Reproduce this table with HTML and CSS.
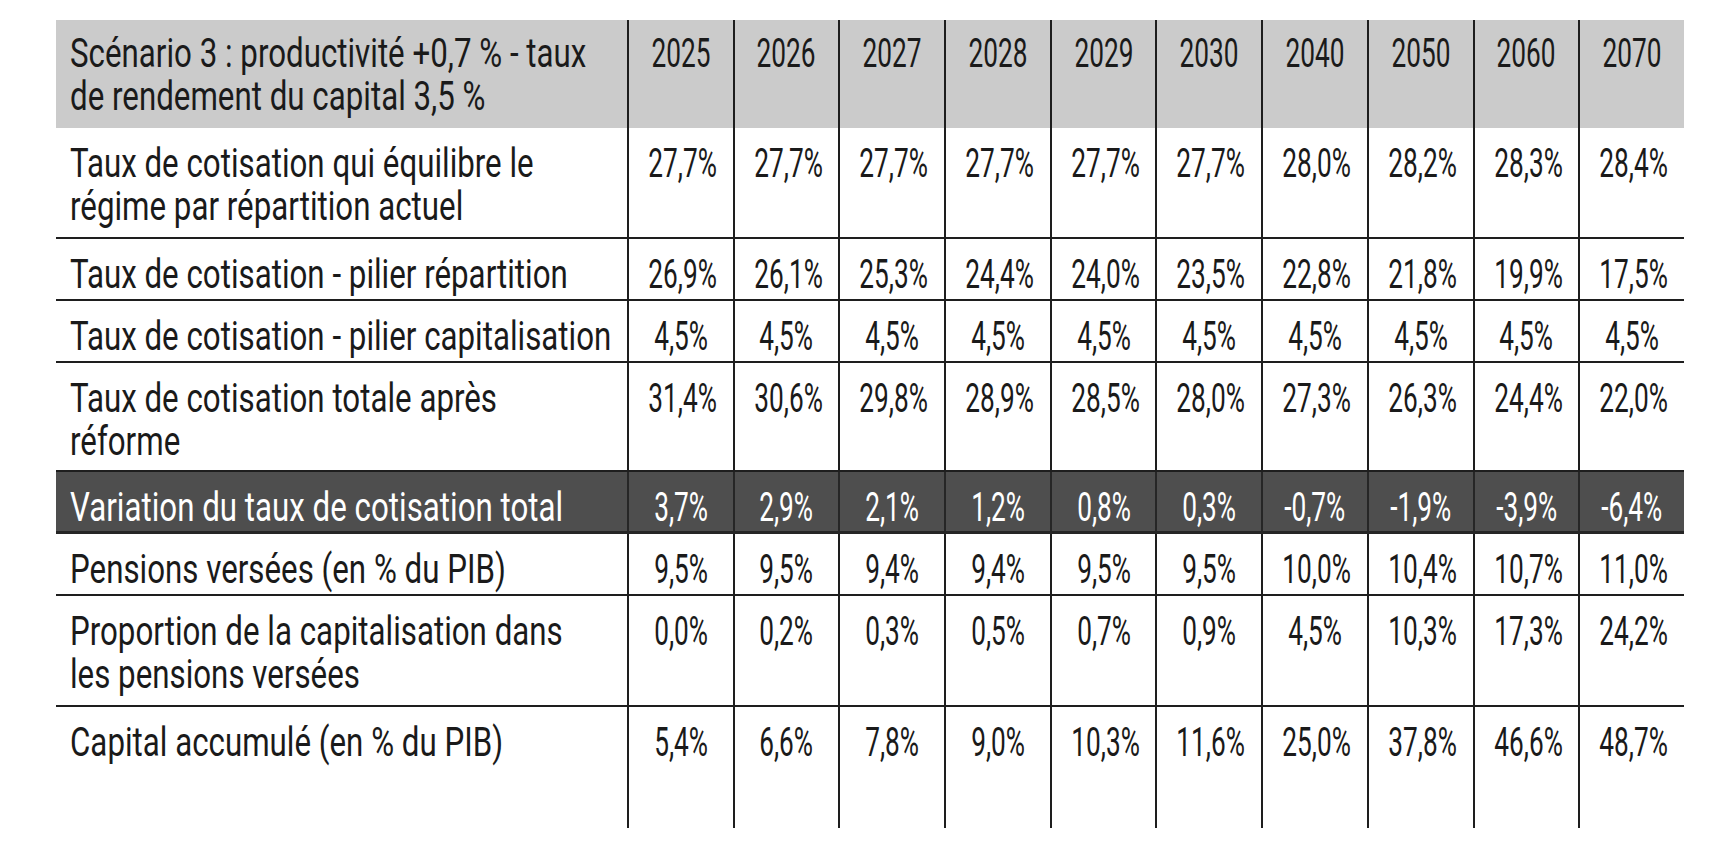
FILE: index.html
```html
<!DOCTYPE html>
<html lang="fr">
<head>
<meta charset="utf-8">
<title>Scénario 3</title>
<link rel="stylesheet" href="styles.css">
</head>
<body>
<div class="table">
  <div class="row head">
    <div class="cell label"><span class="t">Scénario 3 : productivité +0,7 % - taux
de rendement du capital 3,5 %</span></div>
    <div class="cell num"><span class="n">2025</span></div>
    <div class="cell num"><span class="n">2026</span></div>
    <div class="cell num"><span class="n">2027</span></div>
    <div class="cell num"><span class="n">2028</span></div>
    <div class="cell num"><span class="n">2029</span></div>
    <div class="cell num"><span class="n">2030</span></div>
    <div class="cell num"><span class="n">2040</span></div>
    <div class="cell num"><span class="n">2050</span></div>
    <div class="cell num"><span class="n">2060</span></div>
    <div class="cell num"><span class="n">2070</span></div>
  </div>
  <div class="row r-tall">
    <div class="cell label"><span class="t">Taux de cotisation qui équilibre le
régime par répartition actuel</span></div>
    <div class="cell num"><span class="n">27,7%</span></div>
    <div class="cell num"><span class="n">27,7%</span></div>
    <div class="cell num"><span class="n">27,7%</span></div>
    <div class="cell num"><span class="n">27,7%</span></div>
    <div class="cell num"><span class="n">27,7%</span></div>
    <div class="cell num"><span class="n">27,7%</span></div>
    <div class="cell num"><span class="n">28,0%</span></div>
    <div class="cell num"><span class="n">28,2%</span></div>
    <div class="cell num"><span class="n">28,3%</span></div>
    <div class="cell num"><span class="n">28,4%</span></div>
  </div>
  <div class="row r-short">
    <div class="cell label"><span class="t">Taux de cotisation - pilier répartition</span></div>
    <div class="cell num"><span class="n">26,9%</span></div>
    <div class="cell num"><span class="n">26,1%</span></div>
    <div class="cell num"><span class="n">25,3%</span></div>
    <div class="cell num"><span class="n">24,4%</span></div>
    <div class="cell num"><span class="n">24,0%</span></div>
    <div class="cell num"><span class="n">23,5%</span></div>
    <div class="cell num"><span class="n">22,8%</span></div>
    <div class="cell num"><span class="n">21,8%</span></div>
    <div class="cell num"><span class="n">19,9%</span></div>
    <div class="cell num"><span class="n">17,5%</span></div>
  </div>
  <div class="row r-short">
    <div class="cell label"><span class="t">Taux de cotisation - pilier capitalisation</span></div>
    <div class="cell num"><span class="n">4,5%</span></div>
    <div class="cell num"><span class="n">4,5%</span></div>
    <div class="cell num"><span class="n">4,5%</span></div>
    <div class="cell num"><span class="n">4,5%</span></div>
    <div class="cell num"><span class="n">4,5%</span></div>
    <div class="cell num"><span class="n">4,5%</span></div>
    <div class="cell num"><span class="n">4,5%</span></div>
    <div class="cell num"><span class="n">4,5%</span></div>
    <div class="cell num"><span class="n">4,5%</span></div>
    <div class="cell num"><span class="n">4,5%</span></div>
  </div>
  <div class="row r-tall2">
    <div class="cell label"><span class="t">Taux de cotisation totale après
réforme</span></div>
    <div class="cell num"><span class="n">31,4%</span></div>
    <div class="cell num"><span class="n">30,6%</span></div>
    <div class="cell num"><span class="n">29,8%</span></div>
    <div class="cell num"><span class="n">28,9%</span></div>
    <div class="cell num"><span class="n">28,5%</span></div>
    <div class="cell num"><span class="n">28,0%</span></div>
    <div class="cell num"><span class="n">27,3%</span></div>
    <div class="cell num"><span class="n">26,3%</span></div>
    <div class="cell num"><span class="n">24,4%</span></div>
    <div class="cell num"><span class="n">22,0%</span></div>
  </div>
  <div class="row dark">
    <div class="cell label"><span class="t">Variation du taux de cotisation total</span></div>
    <div class="cell num"><span class="n">3,7%</span></div>
    <div class="cell num"><span class="n">2,9%</span></div>
    <div class="cell num"><span class="n">2,1%</span></div>
    <div class="cell num"><span class="n">1,2%</span></div>
    <div class="cell num"><span class="n">0,8%</span></div>
    <div class="cell num"><span class="n">0,3%</span></div>
    <div class="cell num"><span class="n">-0,7%</span></div>
    <div class="cell num"><span class="n">-1,9%</span></div>
    <div class="cell num"><span class="n">-3,9%</span></div>
    <div class="cell num"><span class="n">-6,4%</span></div>
  </div>
  <div class="row r-short">
    <div class="cell label"><span class="t">Pensions versées (en % du PIB)</span></div>
    <div class="cell num"><span class="n">9,5%</span></div>
    <div class="cell num"><span class="n">9,5%</span></div>
    <div class="cell num"><span class="n">9,4%</span></div>
    <div class="cell num"><span class="n">9,4%</span></div>
    <div class="cell num"><span class="n">9,5%</span></div>
    <div class="cell num"><span class="n">9,5%</span></div>
    <div class="cell num"><span class="n">10,0%</span></div>
    <div class="cell num"><span class="n">10,4%</span></div>
    <div class="cell num"><span class="n">10,7%</span></div>
    <div class="cell num"><span class="n">11,0%</span></div>
  </div>
  <div class="row r-tall">
    <div class="cell label"><span class="t">Proportion de la capitalisation dans
les pensions versées</span></div>
    <div class="cell num"><span class="n">0,0%</span></div>
    <div class="cell num"><span class="n">0,2%</span></div>
    <div class="cell num"><span class="n">0,3%</span></div>
    <div class="cell num"><span class="n">0,5%</span></div>
    <div class="cell num"><span class="n">0,7%</span></div>
    <div class="cell num"><span class="n">0,9%</span></div>
    <div class="cell num"><span class="n">4,5%</span></div>
    <div class="cell num"><span class="n">10,3%</span></div>
    <div class="cell num"><span class="n">17,3%</span></div>
    <div class="cell num"><span class="n">24,2%</span></div>
  </div>
  <div class="row last">
    <div class="cell label"><span class="t">Capital accumulé (en % du PIB)</span></div>
    <div class="cell num"><span class="n">5,4%</span></div>
    <div class="cell num"><span class="n">6,6%</span></div>
    <div class="cell num"><span class="n">7,8%</span></div>
    <div class="cell num"><span class="n">9,0%</span></div>
    <div class="cell num"><span class="n">10,3%</span></div>
    <div class="cell num"><span class="n">11,6%</span></div>
    <div class="cell num"><span class="n">25,0%</span></div>
    <div class="cell num"><span class="n">37,8%</span></div>
    <div class="cell num"><span class="n">46,6%</span></div>
    <div class="cell num"><span class="n">48,7%</span></div>
  </div>
</div>
</body>
</html>
```
FILE: styles.css
```css
html, body {
  margin: 0;
  padding: 0;
  background: #ffffff;
}

body {
  font-family: Roboto, "Liberation Sans", sans-serif;
  font-size: 41px;
  line-height: 43px;
  color: #1a1a1a;
}

.table {
  display: flex;
  flex-direction: column;
  width: 1628px;
  margin: 20px 0 0 56px;
}

.row {
  display: grid;
  grid-template-columns: 571px repeat(10, 1fr);
  box-sizing: border-box;
  border-bottom: 2px solid #1e1e1e;
}

.cell {
  box-sizing: border-box;
  padding-top: 14px;
  min-width: 0;
}

.label {
  padding-left: 14px;
}

.num {
  border-left: 2px solid #1e1e1e;
  text-align: center;
}

.t {
  display: inline-block;
  white-space: pre;
  transform: scaleX(0.763);
  transform-origin: left top;
}

.n {
  display: inline-block;
  white-space: nowrap;
  transform: scaleX(0.64);
  transform-origin: center top;
}

.head {
  height: 108px;
  background: #cbcbcb;
  border-bottom: none;
}

.head .cell {
  padding-top: 12px;
}

.r-tall {
  height: 111px;
}

.r-tall2 {
  height: 109px;
}

.r-short {
  height: 62px;
}

.dark {
  height: 62px;
  background: #4e4e4e;
  color: #ffffff;
  border-bottom: 3px solid #262626;
}

.dark .num {
  border-left-color: #262626;
}

.last {
  height: 121px;
  border-bottom: none;
}
```
